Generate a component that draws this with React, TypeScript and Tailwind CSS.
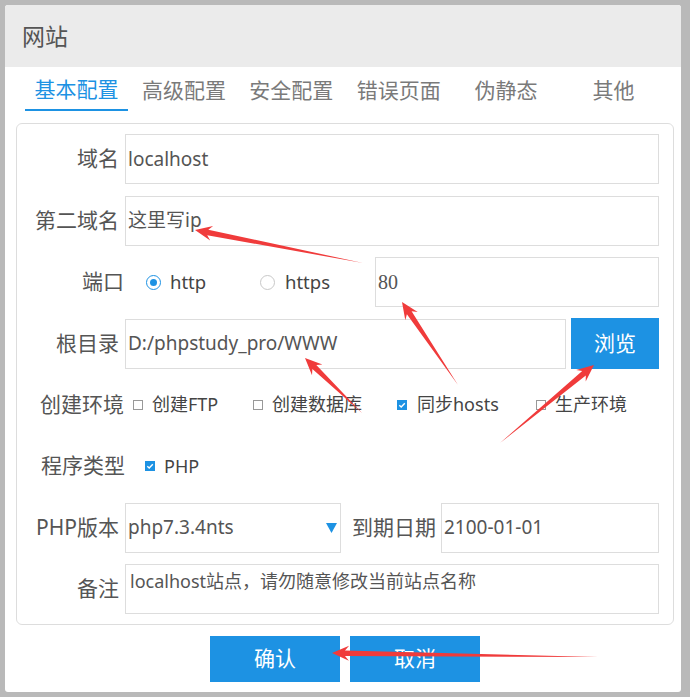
import React from "react";

const tabs = ["基本配置", "高级配置", "安全配置", "错误页面", "伪静态", "其他"];

// red annotation arrows drawn on top of the screenshot
const arrows = [
  { x1: 363, y1: 263, x2: 195, y2: 230 },
  { x1: 458, y1: 385, x2: 402, y2: 302 },
  { x1: 362, y1: 413, x2: 305, y2: 358 },
  { x1: 500, y1: 443, x2: 594, y2: 365 },
  { x1: 598, y1: 657, x2: 332, y2: 653 },
];

function arrowPoints(a: { x1: number; y1: number; x2: number; y2: number }) {
  const dx = a.x2 - a.x1;
  const dy = a.y2 - a.y1;
  const len = Math.hypot(dx, dy);
  const ux = dx / len;
  const uy = dy / len;
  const nx = -uy;
  const ny = ux;
  const at = (back: number, side: number) =>
    `${(a.x2 - ux * back + nx * side).toFixed(1)},${(a.y2 - uy * back + ny * side).toFixed(1)}`;
  return [
    `${a.x1},${a.y1}`,
    at(13, 2.8),
    at(17, 7.5),
    at(0, 0),
    at(17, -7.5),
    at(13, -2.8),
  ].join(" ");
}

function Checkbox({ checked }: { checked?: boolean }) {
  if (checked) {
    return (
      <span className="flex h-[10px] w-[10px] shrink-0 items-center justify-center bg-[#1d92e3]">
        <svg width="8" height="8" viewBox="0 0 8 8">
          <path d="M1.3 4.2 L3.2 6 L6.8 2.2" fill="none" stroke="white" strokeWidth="1.4" />
        </svg>
      </span>
    );
  }
  return <span className="h-[10px] w-[10px] shrink-0 border border-[#999] bg-white" />;
}

function Radio({ checked }: { checked?: boolean }) {
  return (
    <span
      className={`flex h-[15px] w-[15px] shrink-0 items-center justify-center rounded-full border ${
        checked ? "border-[#1d92e3]" : "border-[#c8c8c8]"
      }`}
    >
      {checked && <span className="h-[7px] w-[7px] rounded-full bg-[#1d92e3]" />}
    </span>
  );
}

const label = "shrink-0 text-right text-[21px] text-[#555]";
const input = "flex h-[50px] items-center border border-[#ddd] bg-white pl-[2px] text-[19px] text-[#555]";

export default function App() {
  return (
    <div className="relative h-[697px] w-[690px] overflow-hidden bg-[#b9b9b9] pl-[5px] pt-[5px] font-['Noto_Sans','Noto_Sans_CJK_SC',sans-serif]">
      <div className="flex h-[687px] w-[676px] flex-col overflow-hidden rounded-[3px] bg-white">
        {/* Title */}
        <div className="flex h-[62px] shrink-0 items-center bg-[#ebebeb] pl-[17px] text-[23px] text-[#555]">
          网站
        </div>

        {/* Tabs */}
        <div className="flex h-[44px] gap-[4.4px] pl-[20px]">
          {tabs.map((t, i) => (
            <div
              key={t}
              className={`flex w-[103px] items-center justify-center pt-[3px] text-[21px] ${
                i === 0 ? "border-b-2 border-[#1d92e3] text-[#1d92e3]" : "text-[#7a7a7a]"
              }`}
            >
              {t}
            </div>
          ))}
        </div>

        {/* Form panel */}
        <div className="ml-[11px] mt-[12px] flex h-[502px] w-[658px] flex-col gap-[11.5px] rounded-[6px] border border-[#ddd] pb-[10px] pr-[14px] pt-[10px]">
          <div className="flex h-[50px] items-center">
            <div className={`${label} w-[102px]`}>域名</div>
            <div className={`${input} ml-[6px] flex-1`}>localhost</div>
          </div>

          <div className="flex h-[50px] items-center">
            <div className={`${label} w-[102px]`}>第二域名</div>
            <div className={`${input} ml-[6px] flex-1`}>这里写ip</div>
          </div>

          <div className="flex h-[50px] items-center">
            <div className={`${label} w-[107px]`}>端口</div>
            <div className="ml-[22px] flex w-[114px] items-center gap-[9px] text-[18.5px] text-[#444]">
              <Radio checked />
              http
            </div>
            <div className="flex items-center gap-[10px] text-[18.5px] text-[#444]">
              <Radio />
              https
            </div>
            <div className={`${input} ml-auto w-[284px] font-['Liberation_Serif',serif] text-[20px]`}>80</div>
          </div>

          <div className="flex h-[50px] items-center">
            <div className={`${label} w-[102px]`}>根目录</div>
            <div className={`${input} ml-[6px] flex-1`}>D:/phpstudy_pro/WWW</div>
            <button className="ml-[5px] h-[51px] w-[88px] bg-[#1d92e3] text-[21px] text-white">浏览</button>
          </div>

          <div className="flex h-[50px] items-center text-[18px] text-[#444]">
            <div className={`${label} w-[107px]`}>创建环境</div>
            <div className="ml-[9px] flex w-[120px] items-center gap-[9px]">
              <Checkbox />
              创建FTP
            </div>
            <div className="flex w-[144px] items-center gap-[9px]">
              <Checkbox />
              创建数据库
            </div>
            <div className="flex w-[139px] items-center gap-[10px]">
              <Checkbox checked />
              同步hosts
            </div>
            <div className="flex items-center gap-[9px]">
              <Checkbox />
              生产环境
            </div>
          </div>

          <div className="flex h-[50px] items-center text-[18px] text-[#444]">
            <div className={`${label} w-[108px]`}>程序类型</div>
            <div className="ml-[20px] flex items-center gap-[9px]">
              <Checkbox checked />
              PHP
            </div>
          </div>

          <div className="flex h-[50px] items-center">
            <div className={`${label} w-[102px]`}>PHP版本</div>
            <div className={`${input} ml-[6px] w-[216px] justify-between pr-[3px]`}>
              <span>php7.3.4nts</span>
              <svg width="11" height="10" viewBox="0 0 11 10">
                <path d="M0 0 H11 L5.5 10 Z" fill="#1d92e3" />
              </svg>
            </div>
            <div className={`${label} ml-[11px]`}>到期日期</div>
            <div className={`${input} ml-[5px] flex-1`}>2100-01-01</div>
          </div>

          <div className="flex h-[50px] items-center">
            <div className={`${label} w-[102px]`}>备注</div>
            <div className="ml-[6px] h-[50px] flex-1 border border-[#ddd] pl-[4px] pt-[3px] text-[18px] text-[#555]">
              localhost站点，请勿随意修改当前站点名称
            </div>
          </div>
        </div>

        {/* Buttons */}
        <div className="mt-[11px] flex gap-[10px] pl-[205px]">
          <button className="h-[46px] w-[130px] bg-[#1d92e3] text-[21px] text-white">确认</button>
          <button className="h-[46px] w-[130px] bg-[#1d92e3] text-[21px] text-white">取消</button>
        </div>
      </div>

      <svg className="pointer-events-none absolute left-0 top-0" width="690" height="697">
        {arrows.map((a, i) => (
          <polygon key={i} points={arrowPoints(a)} fill="#f03b3b" />
        ))}
      </svg>
    </div>
  );
}
